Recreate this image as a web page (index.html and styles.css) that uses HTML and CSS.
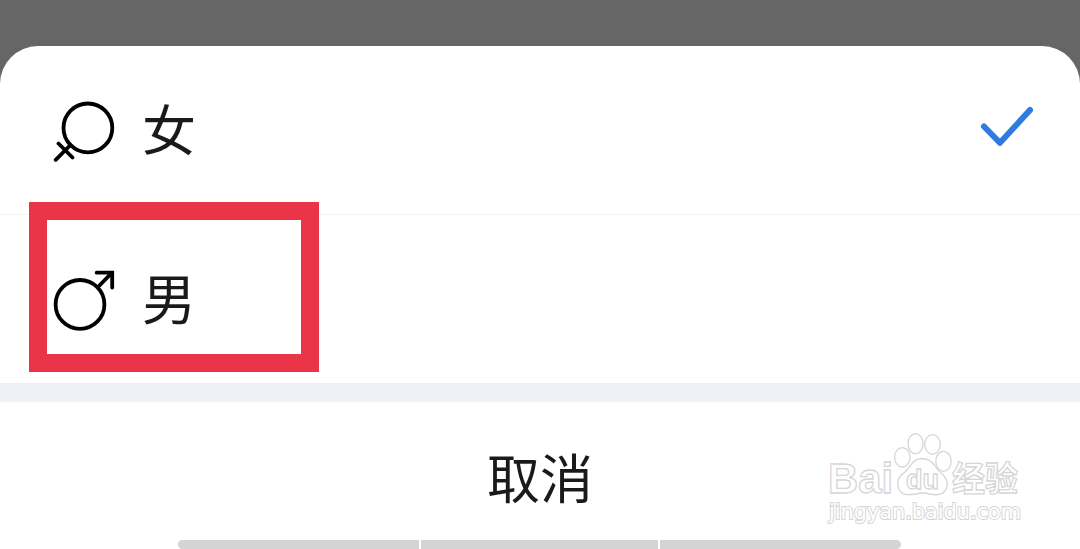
FILE: index.html
```html
<!DOCTYPE html>
<html lang="zh-CN">
<head>
  <meta charset="UTF-8" />
  <meta name="viewport" content="width=device-width, initial-scale=1" />
  <title>选择性别</title>
  <link rel="stylesheet" href="styles.css">
</head>
<body>
  <div class="sheet">
    <div class="option">
      <svg class="gender-icon" viewBox="0 0 64 64">
        <circle cx="35.9" cy="29.9" r="24.4" />
        <path d="M18.5 47L3.7 61.8M6.5 45.5L20.5 59.5" />
      </svg>
      <span class="label">女</span>
      <svg class="check" viewBox="0 0 56 44">
        <path d="M5 21.5L21 37.8L51 5" />
      </svg>
    </div>
    <div class="option option-male">
      <svg class="gender-icon" viewBox="0 0 64 64">
        <circle cx="28" cy="37.4" r="24.4" />
        <path d="M46 20L60 5.7M44.7 5.7H60.2V20.5" />
      </svg>
      <span class="label">男</span>
      <div class="highlight"></div>
    </div>
    <button class="cancel" type="button">取消</button>
    <div class="nav-bar">
      <span></span>
      <span></span>
      <span></span>
    </div>
  </div>

  <svg class="watermark" viewBox="0 0 220 110">
    <text class="wm-logo" x="13" y="68" font-size="42" textLength="65" lengthAdjust="spacingAndGlyphs">Bai</text>
    <ellipse cx="87.3" cy="32.3" rx="7.7" ry="9.7" />
    <ellipse cx="100.5" cy="18.7" rx="7.5" ry="10" />
    <ellipse cx="117.5" cy="19.5" rx="7.8" ry="9.8" />
    <ellipse cx="128.5" cy="36.3" rx="7.7" ry="10" />
    <path d="M107 33.500C98 33.500 96 41 90 47C84 51 81 57 84 64C87 71 94 70 101 69Q108 67 115 69C123 71 130 69 132 62C134 55 129 50 124 46C119 40 116 33.500 107 33.500Z" />
    <text class="wm-du" x="91" y="64" font-size="28" textLength="33" lengthAdjust="spacingAndGlyphs">du</text>
    <text class="wm-cn" x="137" y="66" font-size="34" textLength="66" lengthAdjust="spacingAndGlyphs">经验</text>
    <text class="wm-url" x="14" y="94" font-size="20.5" textLength="192" lengthAdjust="spacingAndGlyphs">jingyan.baidu.com</text>
  </svg>
</body>
</html>
```

FILE: styles.css
```css
* {
  margin: 0;
  padding: 0;
  box-sizing: border-box;
}
body {
  font-family: "Noto Sans CJK SC", sans-serif;
  background: #666666;
  height: 100vh;
  padding-top: 46px;
  overflow: hidden;
  color: #1a1a1a;
}
.sheet {
  display: flex;
  flex-direction: column;
  height: 503px;
  background: #ffffff;
  border-radius: 38px 38px 0 0;
  overflow: hidden;
}
.option {
  display: flex;
  align-items: center;
  position: relative;
  height: 169px;
  padding: 0 44px 0 52px;
  border-bottom: 1px solid #f3f3f3;
}
.option-male {
  height: 168px;
  border-bottom: none;
}
.gender-icon {
  width: 64px;
  height: 64px;
  fill: none;
  stroke: #000000;
  stroke-width: 3.8;
  stroke-linecap: round;
}
.label {
  margin-left: 26px;
  padding-bottom: 5px;
  font-size: 54px;
  line-height: 78px;
}
.check {
  width: 56px;
  height: 44px;
  margin: 0 1px 6px auto;
  fill: none;
  stroke: #2f7be0;
  stroke-width: 6;
  stroke-linecap: round;
  stroke-linejoin: round;
}
/* red frame over the selected row */
.highlight {
  position: absolute;
  left: 29px;
  top: -13px;
  width: 290px;
  height: 170px;
  border: 18px solid #ea3548;
}
.cancel {
  height: 157px;
  border: none;
  border-top: 19px solid #f0f1f6;
  background: #ffffff;
  color: #1a1a1a;
  font-family: inherit;
  font-size: 53px;
  line-height: 78px;
  padding-top: 9px;
}
.nav-bar {
  display: flex;
  gap: 2px;
  width: 723px;
  height: 9px;
  margin-left: 178px;
  border-radius: 5px;
  overflow: hidden;
}
.nav-bar span {
  width: 241px;
  background: #d4d4d4;
}
.nav-bar span:nth-child(2) {
  width: 237px;
}
.watermark {
  position: absolute;
  left: 815px;
  top: 425px;
  width: 220px;
  height: 110px;
  fill: #ffffff;
  stroke: #d6d6d6;
  stroke-width: 1.3;
  font-family: "Liberation Sans", sans-serif;
}
.wm-logo,
.wm-du {
  font-weight: bold;
}
.wm-cn {
  font-family: "Noto Sans CJK SC", sans-serif;
  font-weight: bold;
}
.wm-url {
  font-family: "DejaVu Sans", sans-serif;
  stroke-width: 2;
  paint-order: stroke;
}
```
